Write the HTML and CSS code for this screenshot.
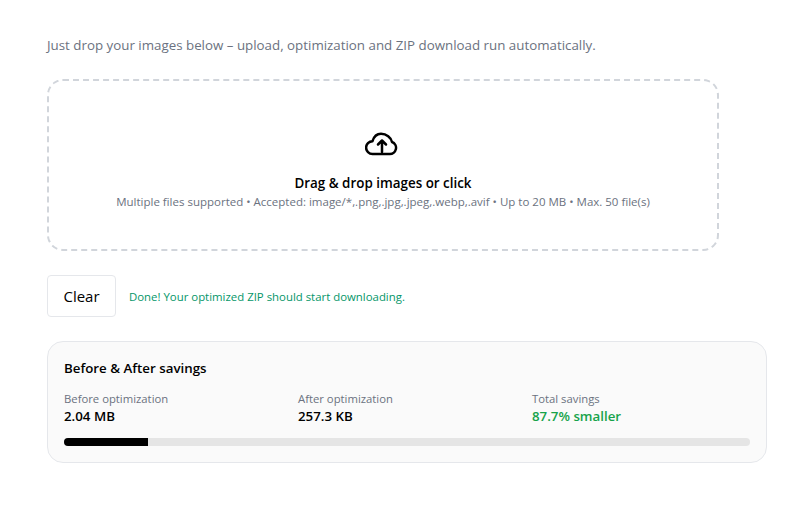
FILE: index.html
```html
<!DOCTYPE html>
<html>

<head>
    <meta charset="utf-8" />
    <title>Image Optimizer</title>
    <link rel="stylesheet" href="styles.css">
</head>

<body>
    <main class="page">
        <p class="intro">Just drop your images below – upload, optimization and ZIP download run automatically.</p>
        <div class="dropzone">
            <svg class="cloud-icon" width="36" height="36" viewBox="0 0 36 36" fill="none" stroke="#000" stroke-width="2.5" stroke-linecap="round" stroke-linejoin="round">
                <path d="M7.500 28H24.500A6.200 6.200 0 0 0 27 16C26 11.300 21.500 7.800 16 7.800C12 7.800 9 10.300 7.500 15.200A6.400 6.400 0 0 0 7.500 28Z" />
                <path d="M17 26V14.500M13 18.500l4-4 4 4" />
            </svg>
            <div class="drop-title">Drag &amp; drop images or click</div>
            <div class="drop-hint">Multiple files supported • Accepted: image/*,.png,.jpg,.jpeg,.webp,.avif • Up to 20 MB • Max. 50 file(s)</div>
        </div>
        <div class="actions">
            <button class="clear-btn">Clear</button>
            <span class="status">Done! Your optimized ZIP should start downloading.</span>
        </div>
        <section class="savings">
            <h2 class="savings-title">Before &amp; After savings</h2>
            <div class="stats">
                <div>
                    <div class="stat-label">Before optimization</div>
                    <div class="stat-value">2.04 MB</div>
                </div>
                <div>
                    <div class="stat-label">After optimization</div>
                    <div class="stat-value">257.3 KB</div>
                </div>
                <div>
                    <div class="stat-label">Total savings</div>
                    <div class="stat-value green">87.7% smaller</div>
                </div>
            </div>
            <div class="bar">
                <div class="bar-fill" style="width: 12.3%"></div>
            </div>
        </section>
    </main>
</body>

</html>
```
FILE: styles.css
```css
body {
    margin: 0;
    background-color: #fff;
    color: #000;
    font-family: "Open Sans", "Noto Sans", sans-serif;
}

.page {
    width: 720px;
    margin-left: 47px;
    padding-top: 36px;
}

.intro {
    margin: 0 0 24px;
    font-size: 13.340px;
    line-height: 19px;
    color: #6b7280;
}

.dropzone {
    box-sizing: border-box;
    width: 672px;
    height: 172px;
    padding-top: 45px;
    border: 2px dashed #d1d5db;
    border-radius: 16px;
    text-align: center;
}

.cloud-icon {
    display: block;
    margin: 0 auto 11px;
}

.drop-title {
    font-size: 13.400px;
    font-weight: 600;
    line-height: 20px;
}

.drop-hint {
    font-size: 11.500px;
    line-height: 17px;
    color: #6b7280;
}

.actions {
    display: flex;
    align-items: center;
    gap: 13px;
    margin-top: 24px;
}

.clear-btn {
    width: 69px;
    height: 42px;
    padding: 0;
    border: 1px solid #e5e7eb;
    border-radius: 4px;
    background-color: #fff;
    color: #000;
    font-family: inherit;
    font-size: 15px;
}

.status {
    font-size: 11.400px;
    color: #059669;
}

.savings {
    box-sizing: border-box;
    height: 122px;
    margin-top: 24px;
    padding: 16px;
    border: 1px solid #e5e7eb;
    border-radius: 16px;
    background-color: #fafafa;
}

.savings-title {
    margin: 0 0 13px;
    font-size: 13.300px;
    font-weight: 600;
    line-height: 20px;
}

.stats {
    display: grid;
    grid-template-columns: repeat(3, 1fr);
    gap: 16px;
}

.stat-label {
    font-size: 11.300px;
    line-height: 16px;
    color: #6b7280;
}

.stat-value {
    font-size: 13.300px;
    font-weight: 600;
    line-height: 18px;
}

.green {
    color: #16a34a;
}

.bar {
    height: 8px;
    margin-top: 13px;
    border-radius: 4px;
    background-color: #e5e5e5;
    overflow: hidden;
}

.bar-fill {
    height: 100%;
    background-color: #000;
}
```
